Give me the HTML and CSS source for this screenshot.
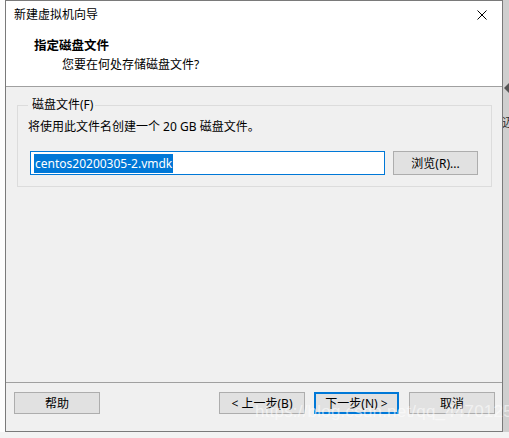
FILE: index.html
```html
<!DOCTYPE html>
<html>
<head>
<meta charset="UTF-8">
<link rel="stylesheet" href="styles.css">
<title>新建虚拟机向导</title>
</head>
<body>

<div class="desk">
  <div class="edge-left"></div>

  <div class="window">
    <div class="titlebar">
      <span class="caption">新建虚拟机向导</span>
      <svg class="close" width="10" height="10" viewBox="0 0 10 10">
        <path d="M0.5 0.5 L9.5 9.5 M9.5 0.5 L0.5 9.5" stroke="#000" stroke-width="1"/>
      </svg>
    </div>

    <div class="header">
      <div class="head-title">指定磁盘文件</div>
      <div class="head-sub">您要在何处存储磁盘文件?</div>
    </div>

    <div class="content">
      <fieldset class="group">
        <legend>磁盘文件(F)</legend>
        <p class="note">将使用此文件名创建一个 20 GB 磁盘文件。</p>
        <div class="file-row">
          <div class="field"><span class="sel">centos20200305-2.vmdk</span></div>
          <div class="btn">浏览(R)...</div>
        </div>
      </fieldset>
    </div>

    <div class="footer">
      <div class="btn wide">帮助</div>
      <div class="spacer"></div>
      <div class="btn wide">&lt; 上一步(B)</div>
      <div class="btn wide default">下一步(N) &gt;</div>
      <div class="btn wide">取消</div>
    </div>
  </div>

  <div class="edge-right">
    <span class="arrow"></span>
    <span class="peek">迈</span>
  </div>
</div>
<div class="under"></div>

<div class="watermark">https://blog.csdn.net/qq_44701258</div>

</body>
</html>
```

FILE: styles.css
```css
body { margin: 0; background-color: #f3f3f3; color: #000;
       font-family: "Noto Sans", "Noto Sans CJK SC", sans-serif;
       font-size: 12px; width: 509px; height: 438px; overflow: hidden;
       position: relative; }

.desk { display: flex; height: 432px; }
.edge-left { width: 5px; background-color: #fdfdfd; }
.edge-right { flex: 1; background-color: #cfcfcf; display: flex;
              flex-direction: column; padding-top: 83px; overflow: hidden; }
.edge-right .arrow { width: 0; height: 0; margin-left: 1px;
                     border-top: 5px solid transparent; border-bottom: 5px solid transparent;
                     border-right: 5px solid #555; }
.edge-right .peek { margin-top: 20px; margin-left: -1px; font-size: 12px; color: #333; }

.window { width: 496px; border: 1px solid #7a7a7a; background-color: #f0f0f0;
          display: flex; flex-direction: column; }

.titlebar { height: 28px; background-color: #fff; display: flex;
            align-items: center; padding: 0 15px 0 8px; }
.caption { flex: 1; line-height: 16px; }
.close { display: block; }

.header { background-color: #fff; padding: 9px 0 12px 28px;
          border-bottom: 1px solid #a0a0a0; }
.head-title { font-weight: bold; line-height: 16px; font-size: 12.5px; }
.head-sub { line-height: 18px; margin-top: 2px; padding-left: 28px; }

.content { flex: 1; padding: 10px 10px 0 11px; }
.group { margin: 0; border: 1px solid #dcdcdc; padding: 2px 13px 11px 10px; }
.group legend { padding: 0 2px 0 4px; margin-left: 0; line-height: 16px; }
.note { margin: 3px 0 0 0; line-height: 18px; }

.file-row { display: flex; align-items: center; gap: 8px; margin-top: 15px; margin-left: 2px; }
.field { width: 350px; height: 22px; border: 1px solid #0078d7; background-color: #fff;
         display: flex; align-items: center; padding-left: 3px; }
.sel { background-color: #0078d7; color: #fff; line-height: 19px; padding: 0 1px; }

.btn { border: 1px solid #adadad; background-color: #e1e1e1; height: 22px;
       width: 83px; display: flex; align-items: center; justify-content: center; }

.footer { border-top: 1px solid #a0a0a0; height: 39px; display: flex;
          align-items: flex-start; padding: 9px 7px 0 8px; gap: 9px; }
.footer .btn { height: 20px; width: 84px; }
.footer .spacer { flex: 1; }
.footer .btn.default { border: 2px solid #0078d7; height: 18px; width: 81px; }
.footer .btn:last-child { margin-left: 1px; }

.under { height: 6px; background-color: #f3f3f3; }

.watermark { position: absolute; left: 255px; top: 402px; font-size: 17px;
             color: rgba(255, 255, 255, 0.55); letter-spacing: 0.2px;
             font-family: "Liberation Sans", sans-serif; white-space: nowrap; }
```
